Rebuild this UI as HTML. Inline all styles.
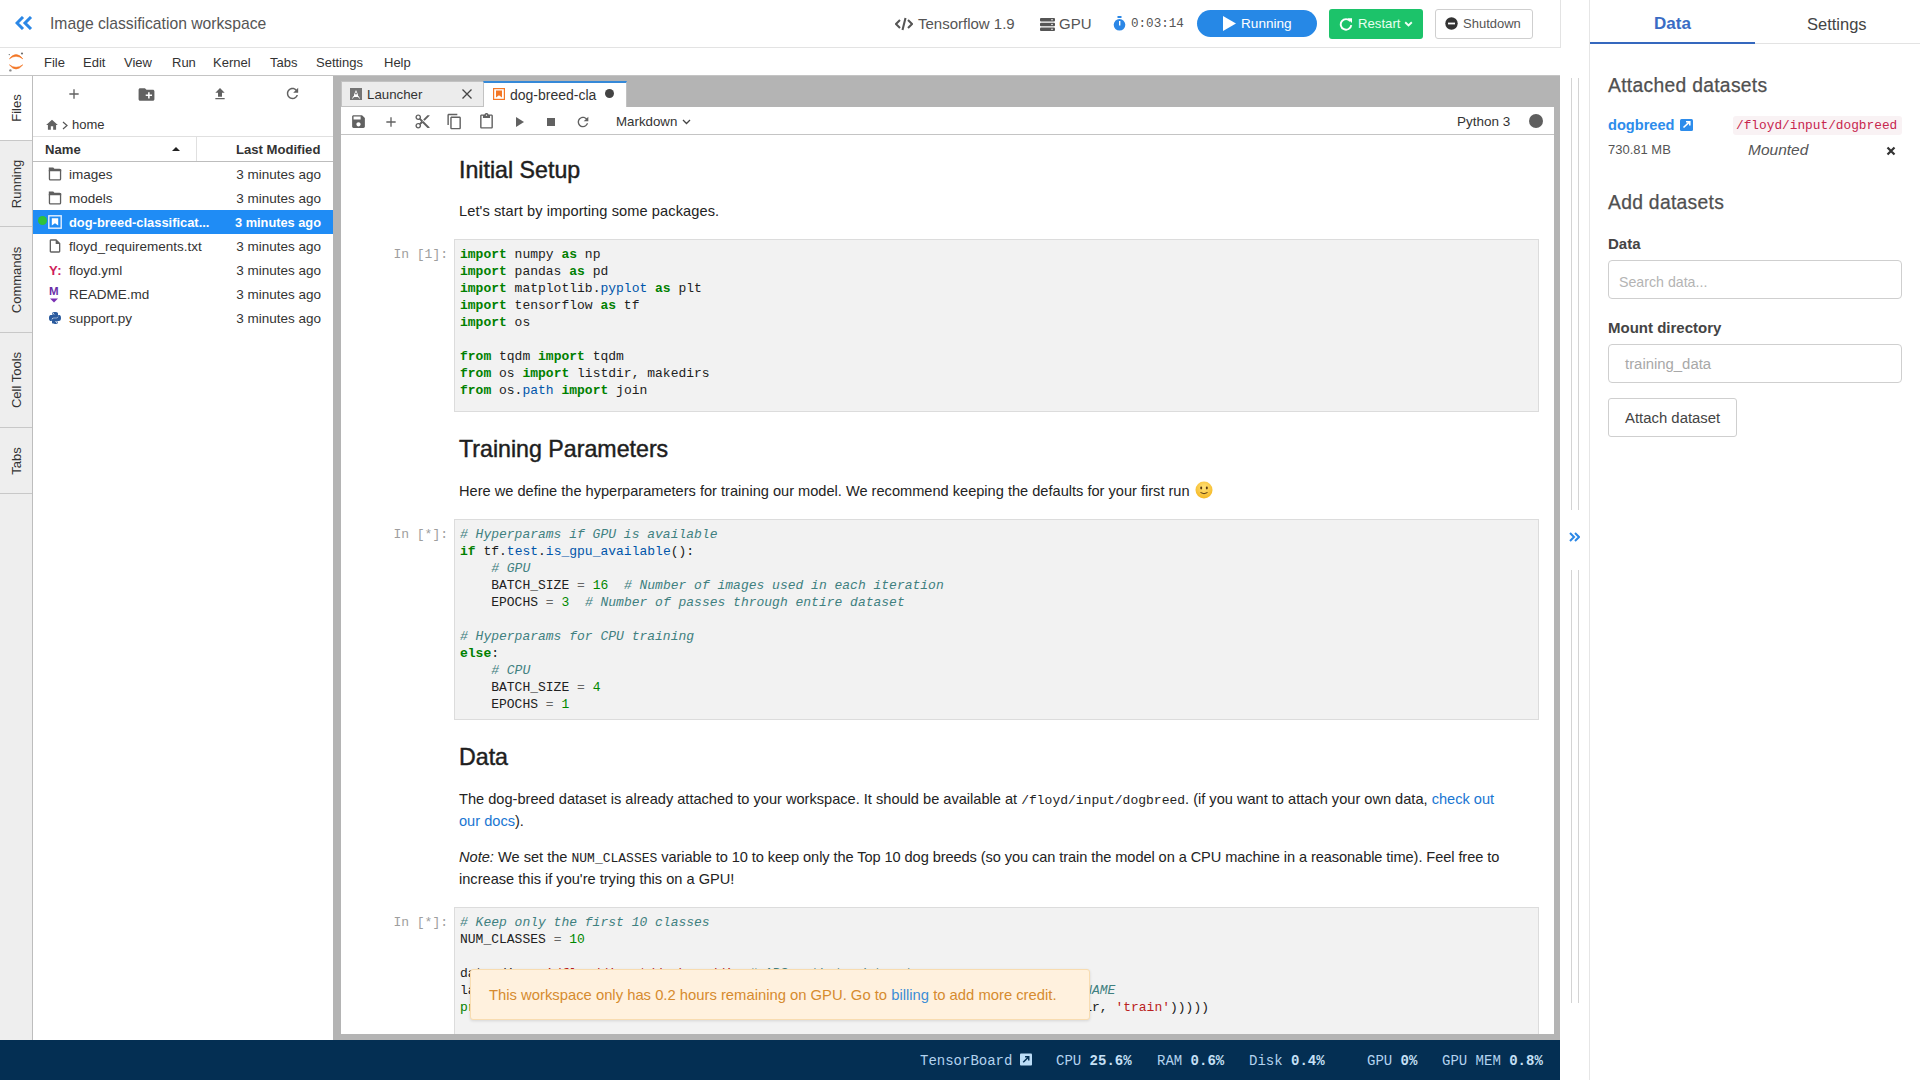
<!DOCTYPE html>
<html><head><meta charset="utf-8">
<style>
*{box-sizing:border-box}
html,body{margin:0;padding:0;width:1920px;height:1080px;overflow:hidden;background:#fff;font-family:"Liberation Sans",sans-serif;color:#212121}
.a{position:absolute;white-space:pre}
.ic{position:absolute;display:block}
.mono{font-family:"Liberation Mono",monospace}
/* code */
.code{position:absolute;font-family:"Liberation Mono",monospace;font-size:13px;line-height:17px;color:#212121;white-space:pre}
.k{color:#008000;font-weight:bold}
.v{color:#0055aa}
.c{color:#408080;font-style:italic}
.n{color:#008800}
.s{color:#ba2121}
.o{color:#666}
.b{color:#008000}
.cell{position:absolute;left:454px;width:1085px;background:#f2f2f2;border:1px solid #dcdcdc}
.prompt{position:absolute;font-family:"Liberation Mono",monospace;font-size:13px;line-height:17px;color:#9e9e9e;text-align:right;width:80px;left:368px}
.md{position:absolute;left:459px;font-size:14.6px;line-height:22px;color:#232323;white-space:pre}
.h2{position:absolute;left:459px;font-size:23.2px;line-height:26px;font-weight:normal;-webkit-text-stroke:0.45px #1e1e1e;color:#1e1e1e;white-space:pre}
.fr{position:absolute;left:33px;width:300px;height:24px;font-size:13.5px;line-height:24px;color:#333}
.fr .nm{position:absolute;left:36px;top:1px}
.fr .dt{position:absolute;right:12px;top:1px}
.fr svg{position:absolute;left:14px;top:4px}
.stab{position:absolute;left:0;width:32px;background:#eeeeee;border-bottom:1px solid #c8c8c8}
.stab span{position:absolute;left:50%;top:50%;transform:translate(-50%,-50%) rotate(-90deg);font-size:13px;color:#333;white-space:pre}
.menu{position:absolute;top:54px;font-size:13px;line-height:18px;color:#333}
.tb{position:absolute;fill:#616161}
.st{position:absolute;top:1051px;font-family:"Liberation Mono",monospace;font-size:14px;line-height:20px;color:#b3d3ef;white-space:pre}
.st b{color:#c6e0f6}
</style></head><body>

<!-- ===== HEADER ===== -->
<div class="a" style="left:0;top:0;width:1561px;height:48px;border-bottom:1px solid #e3e3e3;border-right:1px solid #e3e3e3"></div>
<svg class="ic" style="left:15px;top:16px" width="18" height="14" viewBox="0 0 18 14"><path d="M8 1 L2 7 L8 13" stroke="#2b87e6" stroke-width="3" fill="none" stroke-linejoin="miter"/><path d="M16 1 L10 7 L16 13" stroke="#2b87e6" stroke-width="3" fill="none"/></svg>
<div class="a" style="left:50px;top:14px;font-size:15.7px;line-height:20px;color:#555">Image classification workspace</div>

<!-- header right -->
<svg class="ic" style="left:895px;top:17px" width="18" height="14" viewBox="0 0 18 14"><path d="M5 3 L1 7 L5 11" stroke="#555" stroke-width="2" fill="none"/><path d="M13 3 L17 7 L13 11" stroke="#555" stroke-width="2" fill="none"/><path d="M10.5 1 L7.5 13" stroke="#555" stroke-width="2"/></svg>
<div class="a" style="left:918px;top:14px;font-size:15px;line-height:20px;color:#555">Tensorflow 1.9</div>
<svg class="ic" style="left:1040px;top:18px" width="15" height="13" viewBox="0 0 15 13"><rect x="0" y="0" width="15" height="3.4" rx="1" fill="#555"/><rect x="0" y="4.8" width="15" height="3.4" rx="1" fill="#555"/><rect x="0" y="9.6" width="15" height="3.4" rx="1" fill="#555"/><circle cx="12" cy="1.7" r=".8" fill="#fff"/><circle cx="12" cy="6.5" r=".8" fill="#fff"/><circle cx="12" cy="11.3" r=".8" fill="#fff"/></svg>
<div class="a" style="left:1059px;top:14px;font-size:15px;line-height:20px;color:#555">GPU</div>
<svg class="ic" style="left:1113px;top:16px" width="13" height="15" viewBox="0 0 13 15"><rect x="4.5" y="0" width="4" height="2" fill="#2b87e6"/><circle cx="6.5" cy="8.8" r="5.8" fill="#2b87e6"/><rect x="6" y="5" width="1.4" height="4.5" fill="#fff"/></svg>
<div class="a mono" style="left:1131px;top:14px;font-size:12.6px;line-height:20px;color:#555">0:03:14</div>

<div class="a" style="left:1197px;top:10px;width:120px;height:27px;border-radius:14px;background:#2688e6"></div>
<svg class="ic" style="left:1223px;top:16px" width="13" height="15" viewBox="0 0 13 15"><path d="M0 0 L13 7.5 L0 15 Z" fill="#fff"/></svg>
<div class="a" style="left:1241px;top:14px;font-size:13.6px;line-height:20px;color:#fff">Running</div>

<div class="a" style="left:1329px;top:9px;width:94px;height:30px;border-radius:3px;background:#1cc36a"></div>
<svg class="ic" style="left:1339px;top:17px" width="14" height="14" viewBox="0 0 14 14"><path d="M11.3 4.2 A5.3 5.3 0 1 0 12.3 8.2" stroke="#fff" stroke-width="1.9" fill="none"/><path d="M8.3 1.2 L13 1.2 L13 5.9 Z" fill="#fff"/></svg>
<div class="a" style="left:1358px;top:14px;font-size:13.2px;line-height:20px;color:#e8fff0">Restart</div>
<svg class="ic" style="left:1404px;top:21px" width="9" height="6" viewBox="0 0 9 6"><path d="M1.2 1.2 L4.5 4.4 L7.8 1.2" stroke="#f0fff5" stroke-width="1.9" fill="none"/></svg>

<div class="a" style="left:1435px;top:9px;width:98px;height:30px;border-radius:3px;background:#fff;border:1px solid #cfcfcf"></div>
<svg class="ic" style="left:1445px;top:17px" width="13" height="13" viewBox="0 0 13 13"><circle cx="6.5" cy="6.5" r="6.2" fill="#333"/><rect x="3" y="5.6" width="7" height="1.8" fill="#fff"/></svg>
<div class="a" style="left:1463px;top:14px;font-size:13px;line-height:20px;color:#555">Shutdown</div>

<!-- ===== MENU BAR ===== -->
<div class="a" style="left:0;top:48px;width:1560px;height:28px;border-bottom:1px solid #c4c4c4"></div>
<svg class="ic" style="left:7px;top:51px" width="18" height="22" viewBox="0 0 18 22"><path d="M2.4 7.8 Q9 -0.6 15.8 7.8 Q9 2.8 2.4 7.8 Z" fill="#f37726" stroke="#f37726" stroke-width=".6"/><path d="M2.4 13.8 Q9 22.2 15.8 13.8 Q9 18.8 2.4 13.8 Z" fill="#f37726" stroke="#f37726" stroke-width=".6"/><circle cx="15" cy="2.5" r="1.1" fill="#6f6f6f"/><circle cx="2.3" cy="3.6" r=".7" fill="#6f6f6f"/><circle cx="3.4" cy="19.4" r="1.2" fill="#8a8a8a"/></svg>
<div class="menu" style="left:44px">File</div>
<div class="menu" style="left:83px">Edit</div>
<div class="menu" style="left:124px">View</div>
<div class="menu" style="left:172px">Run</div>
<div class="menu" style="left:213px">Kernel</div>
<div class="menu" style="left:270px">Tabs</div>
<div class="menu" style="left:316px">Settings</div>
<div class="menu" style="left:384px">Help</div>

<!-- ===== LEFT SIDE TABS ===== -->
<div class="a" style="left:0;top:76px;width:33px;height:964px;background:#eeeeee;border-right:1px solid #bdbdbd"></div>
<div class="stab" style="top:76px;height:65px;background:#fff"><span>Files</span></div>
<div class="stab" style="top:141px;height:86px"><span>Running</span></div>
<div class="stab" style="top:227px;height:106px"><span>Commands</span></div>
<div class="stab" style="top:333px;height:95px"><span>Cell Tools</span></div>
<div class="stab" style="top:428px;height:66px"><span>Tabs</span></div>

<!-- ===== FILE BROWSER ===== -->
<div class="a" style="left:33px;top:76px;width:300px;height:964px;background:#fff"></div>
<svg class="tb" style="left:66px;top:86px" width="16" height="16" viewBox="0 0 24 24"><path d="M19 13h-6v6h-2v-6H5v-2h6V5h2v6h6v2z"/></svg>
<svg class="tb" style="left:137px;top:85px" width="19" height="19" viewBox="0 0 24 24"><path d="M20 6h-8l-2-2H4c-1.11 0-1.99.89-1.99 2L2 18c0 1.11.89 2 2 2h16c1.11 0 2-.89 2-2V8c0-1.11-.89-2-2-2zm-1 8h-3v3h-2v-3h-3v-2h3V9h2v3h3v2z"/></svg>
<svg class="tb" style="left:212px;top:86px" width="16" height="16" viewBox="0 0 24 24"><path d="M9 16h6v-6h4l-7-7-7 7h4zm-4 2h14v2H5z"/></svg>
<svg class="tb" style="left:284px;top:85px" width="17" height="17" viewBox="0 0 24 24"><path d="M17.65 6.35C16.2 4.9 14.21 4 12 4c-4.42 0-7.99 3.58-7.99 8s3.57 8 7.99 8c3.73 0 6.84-2.55 7.73-6h-2.08c-.82 2.33-3.04 4-5.65 4-3.31 0-6-2.69-6-6s2.69-6 6-6c1.66 0 3.14.69 4.22 1.78L13 11h7V4l-2.35 2.35z"/></svg>
<!-- breadcrumb -->
<svg class="tb" style="left:45px;top:118px" width="14" height="14" viewBox="0 0 24 24"><path d="M10 20v-6h4v6h5v-8h3L12 3 2 12h3v8z"/></svg>
<svg class="ic" style="left:62px;top:121px" width="6" height="9" viewBox="0 0 6 9"><path d="M1 1 L5 4.5 L1 8" stroke="#555" stroke-width="1.2" fill="none"/></svg>
<div class="a" style="left:72px;top:115px;font-size:13px;line-height:20px;color:#333">home</div>
<!-- header -->
<div class="a" style="left:33px;top:136px;width:300px;height:26px;border-top:1px solid #e0e0e0;border-bottom:1px solid #bdbdbd"></div>
<div class="a" style="left:196px;top:137px;width:1px;height:24px;background:#e0e0e0"></div>
<div class="a" style="left:45px;top:140px;font-size:13.1px;line-height:20px;font-weight:bold;color:#333">Name</div>
<svg class="ic" style="left:172px;top:147px" width="8" height="4" viewBox="0 0 8 4"><path d="M0 4 L4 0 L8 4 Z" fill="#222"/></svg>
<div class="a" style="left:236px;top:140px;font-size:13.1px;line-height:20px;font-weight:bold;color:#333">Last Modified</div>

<!-- rows -->
<div class="fr" style="top:162px"><svg width="14" height="14" viewBox="0 0 14 14" style="left:15px;top:5px"><path d="M.8 .6 H5.3 L6.6 2.2 H13.2 V4.2 H.8 Z" fill="#5f5f5f"/><rect x="1.45" y="2.3" width="11.1" height="10.6" rx="1" fill="none" stroke="#5f5f5f" stroke-width="1.3"/></svg><span class="nm">images</span><span class="dt">3 minutes ago</span></div>
<div class="fr" style="top:186px"><svg width="14" height="14" viewBox="0 0 14 14" style="left:15px;top:5px"><path d="M.8 .6 H5.3 L6.6 2.2 H13.2 V4.2 H.8 Z" fill="#5f5f5f"/><rect x="1.45" y="2.3" width="11.1" height="10.6" rx="1" fill="none" stroke="#5f5f5f" stroke-width="1.3"/></svg><span class="nm">models</span><span class="dt">3 minutes ago</span></div>
<div class="fr" style="top:210px;background:#1f8cf5;color:#fff;font-weight:bold"><svg width="14" height="14" viewBox="0 0 14 14" style="left:15px;top:5px"><rect x=".8" y=".8" width="12.4" height="12.4" fill="none" stroke="#e3efff" stroke-width="1.4"/><path d="M3.8 3.2 H10.2 V10.6 L7 8.3 L3.8 10.6 Z" fill="#fff"/></svg><span class="nm" style="font-size:12.9px">dog-breed-classificat...</span><span class="dt" style="font-size:12.8px">3 minutes ago</span></div>
<div class="a" style="left:37.5px;top:216px;width:9px;height:9px;border-radius:5px;background:#2fc23a"></div>
<div class="fr" style="top:234px"><svg width="16" height="16" viewBox="0 0 24 24" fill="#616161"><path d="M14 2H6c-1.1 0-1.99.9-1.99 2L4 20c0 1.1.89 2 1.99 2H18c1.1 0 2-.9 2-2V8l-6-6zM6 20V4h7v5h5v11H6z"/></svg><span class="nm">floyd_requirements.txt</span><span class="dt">3 minutes ago</span></div>
<div class="fr" style="top:258px"><span class="a" style="left:16px;top:1px;font-weight:bold;color:#cf1d5b;font-size:13px;letter-spacing:0.5px">Y:</span><span class="nm">floyd.yml</span><span class="dt">3 minutes ago</span></div>
<div class="fr" style="top:282px"><span class="a" style="left:16px;top:-3px;font-weight:bold;color:#6a2ea8;font-size:11.5px">M</span><svg width="8" height="5" viewBox="0 0 10 5" style="left:17px;top:16px"><path d="M0 0 L10 0 L5 5 Z" fill="#7a2fb3"/></svg><span class="nm">README.md</span><span class="dt">3 minutes ago</span></div>
<div class="fr" style="top:306px"><svg width="12" height="12" viewBox="0 0 16 16" style="left:16px;top:6px"><path d="M7.9 0C4 0 4.2 1.7 4.2 1.7V3.5H8V4H2.7S0 3.7 0 7.9s2.3 4 2.3 4H3.8V9.9S3.7 7.6 6 7.6H9.8S12 7.6 12 5.5V1.9S12.3 0 7.9 0zM5.8 1.2a.7.7 0 110 1.4.7.7 0 010-1.4z" fill="#2b5b9e"/><path d="M8.1 16c3.9 0 3.7-1.7 3.7-1.7V12.5H8V12h5.3S16 12.3 16 8.1s-2.3-4-2.3-4H12.2v2S12.3 8.4 10 8.4H6.2S4 8.4 4 10.5v3.6S3.7 16 8.1 16zm2.1-1.2a.7.7 0 110-1.4.7.7 0 010 1.4z" fill="#2b5b9e"/></svg><span class="nm">support.py</span><span class="dt">3 minutes ago</span></div>

<!-- ===== DOCK ===== -->
<div class="a" style="left:333px;top:76px;width:1227px;height:964px;background:#b4b4b4"></div>
<!-- tabs -->
<div class="a" style="left:341px;top:81px;width:143px;height:26px;background:#ececec;border:1px solid #c2c2c2;border-right:none"></div>
<svg class="ic" style="left:350px;top:88px" width="12" height="12" viewBox="0 0 12 12"><rect width="12" height="12" fill="#757575"/><path d="M6 2 L8 6.5 L8 9 L4 9 L4 6.5 Z" fill="#fff"/><path d="M2.5 10.5 L4 8 M9.5 10.5 L8 8" stroke="#fff" stroke-width="1"/><circle cx="6" cy="5.5" r=".9" fill="#757575"/></svg>
<div class="a" style="left:367px;top:85px;font-size:13.3px;line-height:20px;color:#333">Launcher</div>
<svg class="ic" style="left:461px;top:88px" width="12" height="12" viewBox="0 0 12 12"><path d="M1.5 1.5 L10.5 10.5 M10.5 1.5 L1.5 10.5" stroke="#444" stroke-width="1.3"/></svg>
<div class="a" style="left:483px;top:81px;width:144px;height:27px;background:#fff;border-top:2px solid #3589d8;border-left:1px solid #c2c2c2;border-right:1px solid #c2c2c2"></div>
<svg class="ic" style="left:493px;top:88px" width="12" height="12" viewBox="0 0 12 12"><rect x=".6" y=".6" width="10.8" height="10.8" fill="none" stroke="#f37726" stroke-width="1.2"/><path d="M3 2.5 H9 V9.5 L6 7.3 L3 9.5 Z" fill="#f37726"/></svg>
<div class="a" style="left:510px;top:85px;font-size:14px;line-height:20px;color:#333">dog-breed-cla</div>
<div class="a" style="left:605px;top:89px;width:9px;height:9px;border-radius:5px;background:#444"></div>

<!-- toolbar -->
<div class="a" style="left:341px;top:107px;width:1213px;height:28px;background:#fff;border-bottom:1px solid #c4c4c4"></div>
<svg class="tb" style="left:350px;top:113px" width="17" height="17" viewBox="0 0 24 24"><path d="M17 3H5c-1.11 0-2 .9-2 2v14c0 1.1.89 2 2 2h14c1.1 0 2-.9 2-2V7l-4-4zm-5 16c-1.66 0-3-1.34-3-3s1.34-3 3-3 3 1.34 3 3-1.34 3-3 3zm3-10H5V5h10v4z"/></svg>
<svg class="tb" style="left:383px;top:114px" width="16" height="16" viewBox="0 0 24 24"><path d="M19 13h-6v6h-2v-6H5v-2h6V5h2v6h6v2z"/></svg>
<svg class="tb" style="left:414px;top:113px" width="17" height="17" viewBox="0 0 24 24"><path d="M9.64 7.64c.23-.5.36-1.05.36-1.64 0-2.21-1.79-4-4-4S2 3.79 2 6s1.79 4 4 4c.59 0 1.14-.13 1.64-.36L10 12l-2.36 2.36C7.140 14.13 6.59 14 6 14c-2.21 0-4 1.79-4 4s1.790 4 4 4 4-1.79 4-4c0-.59-.13-1.14-.36-1.64L12 14l7 7h3v-1L9.64 7.64zM6 8c-1.1 0-2-.89-2-2s.9-2 2-2 2 .89 2 2-.9 2-2 2zm0 12c-1.1 0-2-.89-2-2s.9-2 2-2 2 .89 2 2-.9 2-2 2zm6-7.5c-.28 0-.5-.22-.5-.5s.22-.5.5-.5.5.22.5.5-.22.5-.5.5zM19 3l-6 6 2 2 7-7V3z"/></svg>
<svg class="tb" style="left:446px;top:113px" width="17" height="17" viewBox="0 0 24 24"><path d="M16 1H4c-1.1 0-2 .9-2 2v14h2V3h12V1zm3 4H8c-1.1 0-2 .9-2 2v14c0 1.1.9 2 2 2h11c1.1 0 2-.9 2-2V7c0-1.1-.9-2-2-2zm0 16H8V7h11v14z"/></svg>
<svg class="tb" style="left:478px;top:113px" width="17" height="17" viewBox="0 0 24 24"><path d="M19 2h-4.18C14.4.84 13.3 0 12 0c-1.3 0-2.4.84-2.82 2H5c-1.1 0-2 .9-2 2v16c0 1.1.9 2 2 2h14c1.1 0 2-.9 2-2V4c0-1.1-.9-2-2-2zm-7 0c.55 0 1 .45 1 1s-.45 1-1 1-1-.45-1-1 .45-1 1-1zm7 18H5V4h2v3h10V4h2v16z"/></svg>
<svg class="ic" style="left:516px;top:117px" width="8" height="10" viewBox="0 0 8 10"><path d="M0 0 L8 5 L0 10 Z" fill="#616161"/></svg>
<div class="a" style="left:547px;top:118px;width:8px;height:8px;background:#616161"></div>
<svg class="tb" style="left:575px;top:114px" width="16" height="16" viewBox="0 0 24 24"><path d="M17.65 6.35C16.2 4.9 14.21 4 12 4c-4.42 0-7.99 3.58-7.99 8s3.57 8 7.99 8c3.73 0 6.84-2.55 7.73-6h-2.08c-.82 2.33-3.04 4-5.65 4-3.31 0-6-2.69-6-6s2.69-6 6-6c1.66 0 3.14.69 4.22 1.78L13 11h7V4l-2.35 2.35z"/></svg>
<div class="a" style="left:616px;top:112px;font-size:13.3px;line-height:20px;color:#333">Markdown</div>
<svg class="ic" style="left:682px;top:119px" width="9" height="6" viewBox="0 0 9 6"><path d="M1 1 L4.5 4.5 L8 1" stroke="#444" stroke-width="1.3" fill="none"/></svg>
<div class="a" style="left:1457px;top:112px;font-size:13.5px;line-height:20px;color:#333">Python 3</div>
<div class="a" style="left:1529px;top:114px;width:14px;height:14px;border-radius:7px;background:#5f5f5f"></div>

<!-- notebook area -->
<div class="a" style="left:341px;top:135px;width:1213px;height:899px;background:#fff;overflow:hidden"></div>

<div class="h2" style="top:157px">Initial Setup</div>
<div class="md" style="top:200px;letter-spacing:0.09px">Let's start by importing some packages.</div>

<div class="prompt" style="top:245.5px">In [1]:</div>
<div class="cell" style="top:239px;height:173px"></div>
<div class="code" style="left:460px;top:245.5px"><span class="k">import</span> numpy <span class="k">as</span> np
<span class="k">import</span> pandas <span class="k">as</span> pd
<span class="k">import</span> matplotlib.<span class="v">pyplot</span> <span class="k">as</span> plt
<span class="k">import</span> tensorflow <span class="k">as</span> tf
<span class="k">import</span> os

<span class="k">from</span> tqdm <span class="k">import</span> tqdm
<span class="k">from</span> os <span class="k">import</span> listdir, makedirs
<span class="k">from</span> os.<span class="v">path</span> <span class="k">import</span> join</div>

<div class="h2" style="top:435.5px">Training Parameters</div>
<div class="md" style="top:480px">Here we define the hyperparameters for training our model. We recommend keeping the defaults for your first run </div>
<svg class="ic" style="left:1195px;top:481px" width="18" height="18" viewBox="0 0 18 18"><defs><radialGradient id="eg" cx="50%" cy="35%" r="65%"><stop offset="0" stop-color="#ffe27a"/><stop offset="1" stop-color="#f5b722"/></radialGradient></defs><circle cx="9" cy="9" r="8.5" fill="url(#eg)"/><ellipse cx="6.2" cy="7" rx="1" ry="1.4" fill="#5a3a12"/><ellipse cx="11.8" cy="7" rx="1" ry="1.4" fill="#5a3a12"/><path d="M5.5 11.5 Q9 14 12.5 11.5" stroke="#5a3a12" stroke-width="1" fill="none"/></svg>

<div class="prompt" style="top:525.5px">In [*]:</div>
<div class="cell" style="top:519px;height:201px"></div>
<div class="code" style="left:460px;top:525.5px"><span class="c"># Hyperparams if GPU is available</span>
<span class="k">if</span> tf.<span class="v">test</span>.<span class="v">is_gpu_available</span>():
    <span class="c"># GPU</span>
    BATCH_SIZE <span class="o">=</span> <span class="n">16</span>  <span class="c"># Number of images used in each iteration</span>
    EPOCHS <span class="o">=</span> <span class="n">3</span>  <span class="c"># Number of passes through entire dataset</span>

<span class="c"># Hyperparams for CPU training</span>
<span class="k">else</span>:
    <span class="c"># CPU</span>
    BATCH_SIZE <span class="o">=</span> <span class="n">4</span>
    EPOCHS <span class="o">=</span> <span class="n">1</span></div>

<div class="h2" style="top:744px">Data</div>
<div class="md" style="top:788px">The dog-breed dataset is already attached to your workspace. It should be available at <span class="mono" style="font-size:13px;line-height:10px">/floyd/input/dogbreed</span>. (if you want to attach your own data, <span style="color:#1976d2">check out</span>
<span style="color:#1976d2">our docs</span>).</div>
<div class="md" style="top:846px"><i>Note:</i> We set the <span class="mono" style="font-size:13px;line-height:10px">NUM_CLASSES</span><span style="letter-spacing:-0.08px"> variable to 10 to keep only the Top 10 dog breeds (so you can train the model on a CPU machine in a reasonable time). Feel free to</span>
increase this if you're trying this on a GPU!</div>

<div class="prompt" style="top:913.5px">In [*]:</div>
<div class="cell" style="top:907px;height:127px;border-bottom:none"></div>
<div class="code" style="left:460px;top:913.5px"><span class="c"># Keep only the first 10 classes</span>
NUM_CLASSES <span class="o">=</span> <span class="n">10</span>

data_dir <span class="o">=</span> <span class="s">'/floyd/input/dogbreed/'</span>  <span class="c"># ABS path to dataset</span>
labels <span class="o">=</span> pd.<span class="v">read_csv</span>(join(data_dir, <span class="s">'labels.csv'</span>))  <span class="c"># Dataset labels: ID, BREED_NAME</span>
<span class="b">print</span>(<span class="s">'Total number of training images found: {}'</span>.<span class="v">format</span>(<span class="b">len</span>(listdir(join(data_dir, <span class="s">'train'</span>)))))</div>

<!-- toast -->
<div class="a" style="left:470px;top:969px;width:620px;height:51px;background:#fff1de;border:1px solid #f8dcb0;border-radius:3px;box-shadow:0 1px 3px rgba(0,0,0,0.12)"></div>
<div class="a" style="left:489px;top:985px;font-size:14.8px;line-height:20px;color:#d68b2e">This workspace only has 0.2 hours remaining on GPU. Go to <span style="color:#3c8ed6">billing</span> to add more credit.</div>

<!-- ===== STATUS BAR ===== -->
<div class="a" style="left:0;top:1040px;width:1560px;height:40px;background:#042f53"></div>
<div class="st" style="left:920px">TensorBoard</div>
<svg class="ic" style="left:1020px;top:1053px" width="12" height="13" viewBox="0 0 13 13"><rect width="13" height="13" rx="1" fill="#bcdcf6"/><path d="M3.5 9.5 L9.5 3.5 M5.5 3.5 H9.5 V7.5" stroke="#042f53" stroke-width="1.6" fill="none"/></svg>
<div class="st" style="left:1056px">CPU <b>25.6%</b></div>
<div class="st" style="left:1157px">RAM <b>0.6%</b></div>
<div class="st" style="left:1249px">Disk <b>0.4%</b></div>
<div class="st" style="left:1367px">GPU <b>0%</b></div>
<div class="st" style="left:1442px">GPU MEM <b>0.8%</b></div>

<!-- ===== COLLAPSED STRIP ===== -->
<div class="a" style="left:1571px;top:78px;width:1px;height:432px;background:#d4d4d4"></div>
<div class="a" style="left:1578px;top:78px;width:1px;height:432px;background:#d4d4d4"></div>
<div class="a" style="left:1571px;top:570px;width:1px;height:433px;background:#d4d4d4"></div>
<div class="a" style="left:1578px;top:570px;width:1px;height:433px;background:#d4d4d4"></div>
<svg class="ic" style="left:1569px;top:532px" width="11" height="10" viewBox="0 0 11 10"><path d="M1 1 L5 5 L1 9" stroke="#2b87e6" stroke-width="2" fill="none"/><path d="M6 1 L10 5 L6 9" stroke="#2b87e6" stroke-width="2" fill="none"/></svg>

<!-- ===== RIGHT PANEL ===== -->
<div class="a" style="left:1589px;top:0;width:331px;height:1080px;background:#fff;border-left:1px solid #e6e6e6"></div>
<div class="a" style="left:1590px;top:43px;width:330px;height:1px;background:#e3e3e3"></div>
<div class="a" style="left:1590px;top:42px;width:165px;height:2px;background:#3568be"></div>
<div class="a" style="left:1654px;top:14px;font-size:17px;line-height:20px;font-weight:bold;color:#3a6cc4">Data</div>
<div class="a" style="left:1807px;top:14px;font-size:16.5px;line-height:20px;color:#444">Settings</div>

<div class="a" style="left:1608px;top:72.5px;font-size:19.3px;line-height:26px;letter-spacing:0.3px;color:#505050;-webkit-text-stroke:0.25px #505050">Attached datasets</div>
<div class="a" style="left:1608px;top:115px;font-size:14.6px;line-height:20px;font-weight:bold;color:#2d8ceb">dogbreed</div>
<svg class="ic" style="left:1680px;top:119px" width="13" height="12" viewBox="0 0 13 12"><rect width="13" height="12" rx="1.5" fill="#2d8ceb"/><path d="M3.5 8.5 L9.5 2.8 M6 2.8 H9.8 V6.5" stroke="#fff" stroke-width="1.6" fill="none"/></svg>
<div class="a" style="left:1733px;top:116px;width:169px;height:19px;background:#f9f2f4;border-radius:3px"></div>
<div class="a mono" style="left:1736px;top:116px;font-size:12.8px;line-height:19px;color:#c7254e">/floyd/input/dogbreed</div>
<div class="a" style="left:1608px;top:140px;font-size:13px;line-height:20px;color:#555">730.81 MB</div>
<div class="a" style="left:1748px;top:140px;font-size:15.5px;line-height:20px;font-style:italic;color:#555">Mounted</div>
<svg class="ic" style="left:1886px;top:146px" width="10" height="10" viewBox="0 0 10 10"><path d="M1.5 1.5 L8.5 8.5 M8.5 1.5 L1.5 8.5" stroke="#333" stroke-width="2.2"/></svg>

<div class="a" style="left:1608px;top:190px;font-size:19.3px;line-height:26px;letter-spacing:0.3px;color:#505050;-webkit-text-stroke:0.25px #505050">Add datasets</div>
<div class="a" style="left:1608px;top:234px;font-size:15px;line-height:20px;font-weight:bold;color:#444">Data</div>
<div class="a" style="left:1608px;top:260px;width:294px;height:39px;border:1px solid #cfcfcf;border-radius:4px"></div>
<div class="a" style="left:1619px;top:272px;font-size:14.2px;line-height:20px;color:#b4b4b4">Search data...</div>
<div class="a" style="left:1608px;top:318px;font-size:15px;line-height:20px;font-weight:bold;color:#444">Mount directory</div>
<div class="a" style="left:1608px;top:344px;width:294px;height:39px;border:1px solid #cfcfcf;border-radius:4px"></div>
<div class="a" style="left:1625px;top:354px;font-size:14.9px;line-height:20px;color:#a8a8a8">training_data</div>
<div class="a" style="left:1608px;top:398px;width:129px;height:39px;border:1px solid #cfcfcf;border-radius:3px"></div>
<div class="a" style="left:1625px;top:408px;font-size:14.9px;line-height:20px;color:#444">Attach dataset</div>

</body></html>
